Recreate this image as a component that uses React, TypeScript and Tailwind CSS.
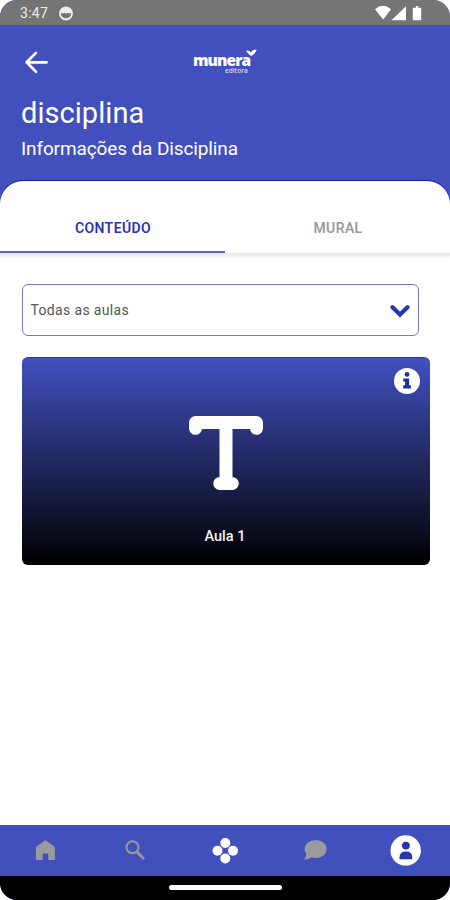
function StatusBar() {
  return (
    <div className="flex h-[25px] shrink-0 items-center bg-[#757575] pr-[28px] pl-[20px] text-[#eeeeee]">
      <span className="pt-[2px] text-[14px] leading-[23px] tracking-[0.3px]">3:47</span>
      <svg className="mt-[2px] ml-[10px]" width="16" height="16" viewBox="0 0 16 16" fill="none" stroke="#eeeeee">
        <circle cx="8" cy="7.5" r="6" strokeWidth="1.8" />
        <path d="M2 6.6 4 2.1h8l2 4.5-2.6.9-1.8-.7-1.6.9-1.6-.9-1.8.7Z" fill="#eeeeee" stroke="none" />
      </svg>
      <svg className="ml-auto" width="48" height="16" viewBox="0 0 48 16" fill="#fff">
        <path d="M1 4.3Q9-2.6 17 4.3L9.2 14.6Z" />
        <path d="M17.5 15.2 32 1.2v14Z" />
        <path d="M39.6 2.7h2.2V1h2.4v1.7h2.2q.8 0 .8.8v10.9q0 .8-.8.8h-6.8q-.8 0-.8-.8V3.5q0-.8.8-.8Z" />
      </svg>
    </div>
  );
}

function Logo() {
  return (
    <div className="flex h-[26px] w-[66px] flex-col font-['Open_Sans','Noto_Sans',sans-serif] text-white">
      <div className="flex h-[19px]">
        <span className="w-[54px] text-[15.5px] leading-[23px] font-extrabold tracking-[-0.9px]">munera</span>
        <svg className="-ml-px shrink-0" width="11" height="8" viewBox="0 0 12 8" fill="#fff">
          <path d="M0 1.5Q4 .8 5.4 3.6Q7 .2 11.6.3Q10.5 5 5.7 7.4Q2.2 5 0 1.5Z" />
        </svg>
      </div>
      <span className="ml-[32px] text-[6.5px] leading-[6px] font-semibold text-[#d3d8ff]">editora</span>
    </div>
  );
}

function Header() {
  return (
    <header className="h-[156px] shrink-0 pl-[22px] text-white">
      <div className="flex h-[70px] items-center pt-[4px]">
        <svg width="28" height="28" viewBox="0 0 28 28" fill="none" stroke="#fff" strokeWidth="2.7" strokeLinecap="round" strokeLinejoin="round">
          <path d="M24.6 14.3H4.8M14 4.9 4.6 14.3l9.4 9.4" />
        </svg>
        <div className="ml-[143px]">
          <Logo />
        </div>
      </div>
      <h1 className="-ml-px pt-px text-[29px] leading-[34px] tracking-[0.05px]">disciplina</h1>
      <p className="-ml-px mt-[8px] text-[19px] leading-[22px] tracking-[-0.12px]">Informações da Disciplina</p>
    </header>
  );
}

function Tabs() {
  return (
    <div className="flex h-[72px] shrink-0 text-center text-[14px] font-medium">
      <div className="flex-1 border-b-2 border-[#6264bd] pt-[37px] pl-px leading-[20px] font-semibold tracking-[0.4px] text-[#2b35b4]">CONTEÚDO</div>
      <div className="flex-1 pt-[37px] pl-px leading-[20px] tracking-[0.4px] text-[#969696]">MURAL</div>
    </div>
  );
}

function LessonCard() {
  return (
    <div className="relative mt-[21px] flex h-[208px] w-[408px] flex-col items-center rounded-[6px] border-t border-[#2835ac] bg-linear-to-b/srgb from-[#4150c0] to-black pt-[57px]">
      <svg width="76" height="76" viewBox="0 0 76 76" fill="none" stroke="#fff" strokeLinecap="round" strokeLinejoin="round" strokeWidth="13">
        <path d="M7.5 13.3V7.5H68.5v5.8" />
        <path d="M38 8v60M31.7 68.5h12.6" />
      </svg>
      <div className="mt-[36px] pr-px text-[14.5px] leading-[20px] font-medium text-[#f3f3f3]">Aula 1</div>
      <svg className="absolute top-[10px] right-[10px]" width="26" height="26" viewBox="0 0 26 26">
        <circle cx="13" cy="13" r="13" fill="#fff" />
        <g fill="#202ea8">
          <circle cx="13" cy="6.4" r="2.4" />
          <path d="M9.2 10.4h5.9v6.9h1.8v3.1H9.2v-3.1h1.9v-3.9H9.2Z" />
        </g>
      </svg>
    </div>
  );
}

function BottomNav() {
  return (
    <nav className="grid h-[51px] shrink-0 grid-cols-5 place-items-center bg-[#4150bd]">
      <svg className="mb-px" width="20" height="20" viewBox="0 0 20 20" fill="#999aa0">
        <path d="M10.4.2 19 6.2q.9.7.9 1.8v12h-6.6v-6.6H7.8V20H.9V8q0-1.1.9-1.8Z" />
      </svg>
      <svg className="mb-[2px]" width="20" height="20" viewBox="0 0 20 20" fill="none" stroke="#999aa0">
        <circle cx="7.5" cy="7.2" r="6" strokeWidth="2" />
        <path d="m12 12 7 7" strokeWidth="2.6" />
      </svg>
      <svg width="26" height="26" viewBox="0 0 26 26" fill="#fff">
        <circle cx="13.3" cy="5" r="5" />
        <circle cx="5.5" cy="12.8" r="5" />
        <circle cx="21" cy="12.8" r="5" />
        <circle cx="13.3" cy="20.5" r="5" />
      </svg>
      <svg className="mb-px" width="24" height="22" viewBox="0 0 24 22" fill="#999b9f">
        <ellipse cx="12.6" cy="10" rx="11" ry="9.1" />
        <path d="M3.2 13.5Q4 17.3.8 20.4 6 20.8 9 17.7Z" />
      </svg>
      <svg width="31" height="31" viewBox="0 0 31 31">
        <circle cx="15.7" cy="15.4" r="15.2" fill="#fff" />
        <g fill="#2635ad">
          <circle cx="15.9" cy="10.6" r="3.9" />
          <path d="M9.5 24.2v-2Q9.5 16.4 15.9 16.4t6.4 5.8v2Z" />
        </g>
      </svg>
    </nav>
  );
}

export default function App() {
  return (
    <div className="h-[900px] w-[450px] bg-white font-[Roboto,sans-serif]">
      <div className="flex h-full flex-col overflow-hidden rounded-[17px] bg-[#4150bd]">
        <StatusBar />
        <Header />
        <main className="flex min-h-0 flex-1 flex-col rounded-t-[23px] bg-white shadow-[0_-1px_0_#1520a9]">
          <Tabs />
          <div className="h-[6px] shrink-0 bg-linear-to-b from-[#e6e6e6] to-white" />
          <div className="pt-[25px] pr-[22px] pl-[21.5px]">
            <div className="flex h-[52px] w-[397px] items-center justify-between rounded-[6px] border border-[#7778c5] pr-[8px] pl-[8px]">
              <span className="pt-px text-[14px] tracking-[0.35px] text-[#555555]">Todas as aulas</span>
              <svg className="mt-px" width="20" height="14" viewBox="0 0 20 14" fill="none" stroke="#2736b0" strokeWidth="4.2" strokeLinecap="round">
                <path d="m2.5 3.2 7.5 7.3 7.5-7.3" />
              </svg>
            </div>
            <LessonCard />
          </div>
        </main>
        <BottomNav />
        <footer className="flex h-[24px] shrink-0 justify-center bg-black pt-[9px]">
          <div className="h-[5px] w-[113px] rounded-full bg-white" />
        </footer>
      </div>
    </div>
  );
}
